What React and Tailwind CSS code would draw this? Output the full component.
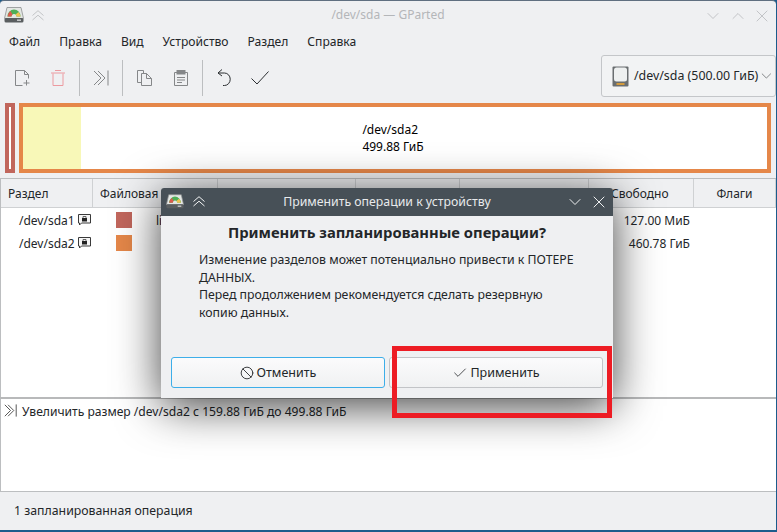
import { Ban, Check, ChevronDown, ChevronUp, X } from "lucide-react";

const columns = [
  { label: "Раздел", width: "w-[92px]", align: "pl-[7px] text-left" },
  { label: "Файловая система", width: "w-[125px]", align: "pl-[7px] text-left" },
  { label: "", width: "w-[138px]", align: "text-center" },
  { label: "", width: "w-[104px]", align: "text-center" },
  { label: "", width: "w-[129px]", align: "text-center" },
  { label: "Свободно", width: "w-[105px]", align: "pl-[22px] text-left" },
  { label: "Флаги", width: "flex-1", align: "text-center" },
];

const rows = [
  { name: "/dev/sda1", color: "bg-[#c1665c]", fs: "linux", free: "127.00 МиБ" },
  { name: "/dev/sda2", color: "bg-[#e58749]", fs: "", free: "460.78 ГиБ" },
];

function GpartedLogo({ className }) {
  return (
    <svg className={className} viewBox="0 0 20 16">
      <path d="M3 0.5h14l2.5 11h-19z" fill="#e4e7e4" stroke="#8b8f90" strokeWidth="0.8" />
      <path d="M3.5 9.5a6.5 7 0 0 1 13 0l-4 0a2.5 2.5 0 0 0-5 0z" fill="#4fae57" />
      <path d="M3.5 9.5a6.5 7 0 0 1 3-5.5l2 3.5a2.5 2.5 0 0 0-1 2z" fill="#dc5a4e" />
      <path d="M12.5 9.5a2.5 2.5 0 0 0-1-2l3-2.5a6.5 7 0 0 1 2 4.5z" fill="#f1c453" />
      <rect x="0.5" y="11" width="19" height="4.5" rx="1.5" fill="#5a5e60" />
      <rect x="13" y="12.5" width="4" height="1.4" fill="#cfd2d3" />
    </svg>
  );
}

function DriveIcon() {
  return (
    <svg className="h-[21px] w-[17px] shrink-0" viewBox="0 0 17 21">
      <rect x="0.5" y="0.5" width="16" height="20" rx="1" fill="#6a6e70" />
      <rect x="2" y="1.5" width="13" height="14" rx="2.5" fill="#eef0f0" />
      <rect x="4.5" y="17" width="8" height="2" fill="#d39a3c" />
    </svg>
  );
}

function LockIcon() {
  return (
    <svg className="h-[12px] w-[13px] shrink-0" viewBox="0 0 13 12">
      <path d="M0.5 0.5h12v8.5h-9l-2 2v-2h-1z" fill="#f6f6f6" stroke="#3a3a3a" strokeWidth="1" />
      <rect x="4" y="4" width="5" height="3.5" fill="#222" />
      <path d="M5 4V2.5h3V4" fill="none" stroke="#444" strokeWidth="0.8" />
    </svg>
  );
}

function ResizeIcon({ className, color }) {
  return (
    <svg className={className} viewBox="0 0 16 16" fill="none" stroke={color} strokeWidth="1">
      <path d="M1 1l7 7-7 7M5 1l7 7-7 7" />
      <path d="M15 0.5v15" />
    </svg>
  );
}

function ShadeIcon({ color }) {
  return (
    <svg className="h-[11px] w-[12px]" viewBox="0 0 12 11" fill="none" stroke={color} strokeWidth="1">
      <path d="M0.5 5.5L6 0.7l5.5 4.8M0.5 10L6 5.2l5.5 4.8" />
    </svg>
  );
}

function ToolButton({ children }) {
  return <div className="flex h-[36px] w-[36px] items-center justify-center">{children}</div>;
}

function ToolSep() {
  return <div className="mx-[3px] h-[36px] w-px shrink-0 bg-[#bcbec0]" />;
}

export default function App() {
  return (
    <div
      className="relative h-[532px] w-[777px] overflow-hidden bg-[#1b5c8c] text-[12px] text-[#232629]"
      style={{ fontFamily: '"Noto Sans", sans-serif' }}
    >
      <div className="flex h-[530px] w-[776px] flex-col rounded-t-[4px] border-t border-[#5f6f80] bg-[#eff0f2]">
        {/* title bar */}
        <div className="relative flex h-[28px] shrink-0 items-center justify-center text-[#b4b6b9]">
          /dev/sda — GParted
          <div className="absolute left-[4px] top-[6px] flex items-center gap-[8px]">
            <GpartedLogo className="h-[16px] w-[20px]" />
            <ShadeIcon color="#c2c4c6" />
          </div>
          <div className="absolute right-[4px] top-[5px] flex items-center gap-[4.5px] text-[#b9bbbe]">
            <ChevronDown className="h-[20px] w-[20px]" strokeWidth={1} />
            <ChevronUp className="h-[20px] w-[20px]" strokeWidth={1} />
            <X className="h-[20px] w-[20px]" strokeWidth={1} />
          </div>
        </div>

        {/* menu */}
        <div className="flex h-[25px] shrink-0 items-center gap-[19px] pl-[9px] pt-[2px] text-[12.1px]">
          {["Файл", "Правка", "Вид", "Устройство", "Раздел", "Справка"].map((m) => (
            <span key={m}>{m}</span>
          ))}
        </div>

        {/* toolbar */}
        <div className="flex h-[47px] shrink-0 items-center pl-[4px]">
          <ToolButton>
            <svg className="h-[16px] w-[15px]" viewBox="0 0 15 16" fill="none" stroke="#858789">
              <path d="M7.5 15.5h-7v-15h9l4 4v4M9.5 0.5v4h4" />
              <path d="M8.5 13h6M11.5 10v5.5" />
            </svg>
          </ToolButton>
          <ToolButton>
            <svg className="h-[16px] w-[14px]" viewBox="0 0 14 16" fill="none" stroke="#ec9aa0">
              <path d="M0 3h14M4 0.5h6M2 3.5v12h10v-12" />
            </svg>
          </ToolButton>
          <ToolSep />
          <ToolButton>
            <ResizeIcon className="h-[16px] w-[16px]" color="#858789" />
          </ToolButton>
          <ToolSep />
          <ToolButton>
            <svg className="h-[16px] w-[15px]" viewBox="0 0 15 16" fill="none" stroke="#858789">
              <path d="M4.5 12.5h-4v-12h6v3" />
              <path d="M4.5 3.5h5l5 5v7h-10z" />
              <path d="M9.5 3.5v5h5" />
            </svg>
          </ToolButton>
          <div className="w-px" />
          <ToolButton>
            <svg className="h-[16px] w-[14px]" viewBox="0 0 14 16" fill="none" stroke="#858789">
              <path d="M3 2.5H0.5v13h13v-13H11" />
              <rect x="3" y="0.5" width="8" height="3.5" fill="#858789" />
              <path d="M3 7.5h8M3 10h8M3 12.5h5" />
            </svg>
          </ToolButton>
          <ToolSep />
          <ToolButton>
            <svg className="h-[17px] w-[14px]" viewBox="0 0 14 17" fill="none" stroke="#2b2e31">
              <path d="M5 0.5l-4 3.5 4 3" />
              <path d="M1 4h6.5a5.5 6 0 0 1 0 12.5H6" />
            </svg>
          </ToolButton>
          <ToolButton>
            <svg className="h-[14px] w-[18px]" viewBox="0 0 18 14" fill="none" stroke="#2b2e31">
              <path d="M0.5 7.5l5.5 5.5 11.5-12.5" />
            </svg>
          </ToolButton>
          <div className="ml-auto mt-[1px] flex h-[42px] w-[175px] items-center self-start rounded-[3px] border border-[#c4c6c9] bg-[#f2f3f4] pl-[10px]">
            <DriveIcon />
            <span className="ml-[5px] whitespace-nowrap text-[12.4px]">/dev/sda (500.00 ГиБ)</span>
            <ChevronDown className="ml-auto h-[20px] w-[20px] text-[#55585b]" strokeWidth={1} />
          </div>
        </div>

        {/* partition map */}
        <div className="mt-[2px] flex h-[70px] shrink-0 gap-[4px] pl-[5px] pr-[5px]">
          <div className="h-full w-[10px] shrink-0 border-4 border-[#c1665c] bg-white" />
          <div className="flex h-full flex-1 border-4 border-[#e58749] bg-white">
            <div className="h-full w-[58px] bg-[#f8f8b8]" />
            <div className="flex flex-1 items-center justify-center pr-[62px] text-[12px] leading-[17px] text-black">
              <div>
                <div>/dev/sda2</div>
                <div>499.88 ГиБ</div>
              </div>
            </div>
          </div>
        </div>

        {/* partition table */}
        <div className="mt-[5px] flex h-[219px] shrink-0 flex-col border-l border-t border-[#bcbec0] bg-white">
          <div className="flex h-[29px] shrink-0 border-b border-[#cfd1d3] bg-[#eff0f2]">
            {columns.map((c, i) => (
              <div
                key={i}
                className={`${c.width} ${c.align} overflow-hidden whitespace-nowrap border-r border-[#cfd1d3] leading-[30px]`}
              >
                {c.label}
              </div>
            ))}
          </div>
          {rows.map((r) => (
            <div key={r.name} className="flex h-[23px] shrink-0 items-center">
              <span className="ml-[18px] w-[59px] pt-[2px]">{r.name}</span>
              <LockIcon />
              <div className={`ml-[25px] h-[16px] w-[16px] shrink-0 ${r.color}`} />
              <span className="ml-[24px] w-[200px] pt-[2px]">{r.fs}</span>
              <span className="ml-[204px] w-[130px] pt-[2px] text-right">{r.free}</span>
            </div>
          ))}
        </div>

        <div className="h-[2px] shrink-0 bg-[#b8b9ba]" />

        {/* operations log */}
        <div className="flex h-[93px] shrink-0 items-start gap-[5px] border-b border-l border-[#bcbec0] bg-white pl-[3px] pt-[4px]">
          <ResizeIcon className="mt-[1px] h-[13px] w-[13px]" color="#333" />
          <span className="text-[12.1px] leading-[18px]">Увеличить размер /dev/sda2 с 159.88 ГиБ до 499.88 ГиБ</span>
        </div>

        {/* status bar */}
        <div className="flex flex-1 items-center pl-[14px] text-[12.3px]">1 запланированная операция</div>
      </div>

      {/* dialog */}
      <div className="absolute left-[161px] top-[188px] flex h-[210px] w-[452px] flex-col rounded-t-[3px] bg-[#eff0f2] shadow-[0_8px_45px_rgba(0,0,0,0.75)]">
        <div className="relative flex h-[28px] shrink-0 items-center justify-center rounded-t-[3px] bg-[#475057] text-[12.3px] text-[#e8eaec]">
          Применить операции к устройству
          <div className="absolute left-[5px] top-[6px] flex items-center gap-[9px]">
            <GpartedLogo className="h-[15px] w-[18px]" />
            <ShadeIcon color="#f2f3f4" />
          </div>
          <div className="absolute right-[4px] top-[4px] flex items-center gap-[4px] text-[#eef0f1]">
            <ChevronDown className="h-[20px] w-[20px]" strokeWidth={1.2} />
            <X className="h-[20px] w-[20px]" strokeWidth={1.2} />
          </div>
        </div>
        <div className="mt-[6px] text-center text-[14.8px] font-bold leading-[20px]">
          Применить запланированные операции?
        </div>
        <div className="ml-[38px] mt-[9px] w-[378px] text-[12.3px] leading-[17.5px]">
          <p>Изменение разделов может потенциально привести к ПОТЕРЕ ДАННЫХ.</p>
          <p>Перед продолжением рекомендуется сделать резервную копию данных.</p>
        </div>
        <div className="mt-auto mb-[10px] flex gap-[4px] pl-[10px] pr-[10px] text-[12.5px]">
          <button className="flex h-[31px] w-[214px] items-center justify-center gap-[3px] rounded-[3px] border border-[#3daee9] bg-gradient-to-b from-[#fbfbfc] to-[#f0f1f2] pt-[1px]">
            <Ban className="h-[14px] w-[14px]" strokeWidth={1.5} />
            Отменить
          </button>
          <button className="flex h-[31px] w-[214px] items-center justify-center gap-[2px] rounded-[3px] border border-[#c2c4c7] bg-gradient-to-b from-[#fbfbfc] to-[#f0f1f2] pt-[1px]">
            <Check className="h-[16px] w-[16px]" strokeWidth={1.2} />
            Применить
          </button>
        </div>
      </div>

      {/* red annotation */}
      <div className="absolute left-[392px] top-[346px] h-[72px] w-[220px] border-[5px] border-[#ed1c24]" />
    </div>
  );
}
